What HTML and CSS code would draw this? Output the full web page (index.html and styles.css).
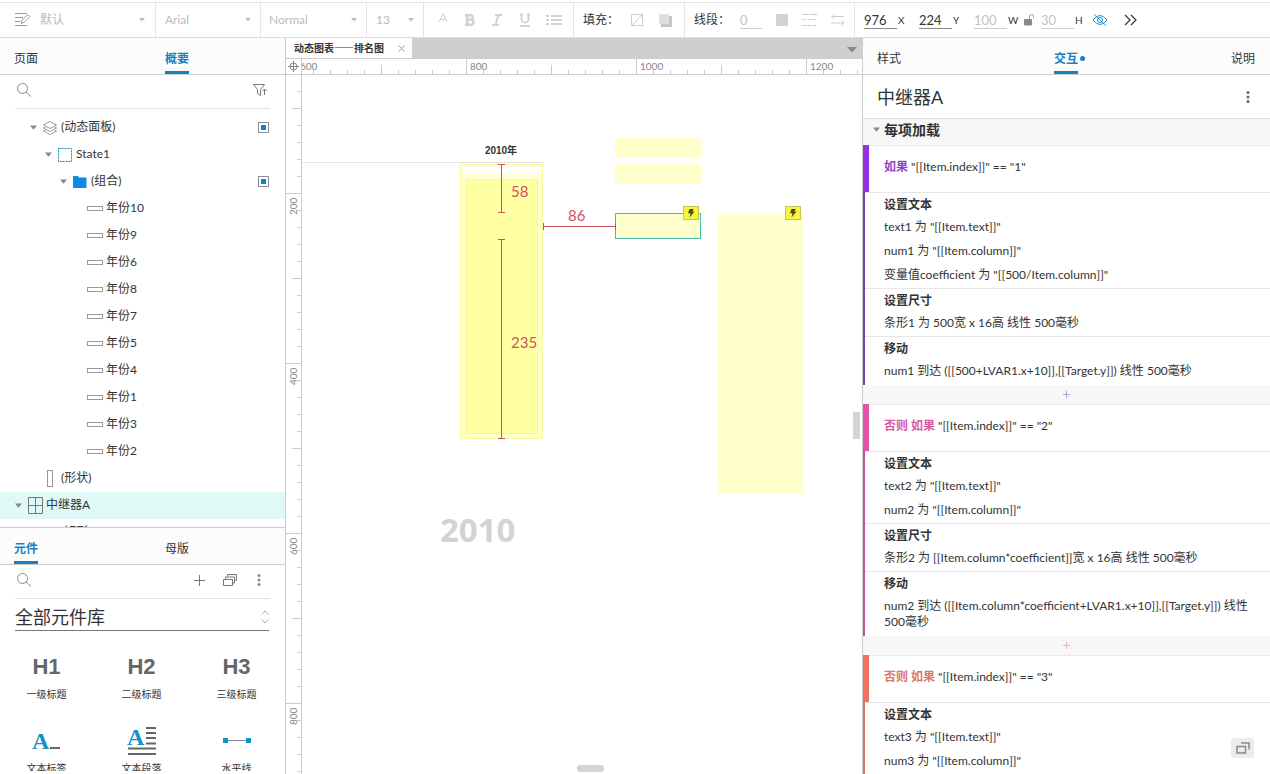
FILE: index.html
```html
<!DOCTYPE html>
<html lang="zh-CN">
<head>
<meta charset="utf-8">
<title>动态图表——排名图</title>
<link rel="stylesheet" href="styles.css">
</head>
<body>
<svg class="defs" aria-hidden="true">
  <symbol id="caret" viewBox="0 0 8 6"><path d="M0 0h8L4 5z" fill="currentColor"/></symbol>
  <symbol id="drop" viewBox="0 0 6 4"><path d="M0 0h6L3 3.5z" fill="currentColor"/></symbol>
  <symbol id="search" viewBox="0 0 16 16"><circle cx="6.5" cy="6.5" r="5" fill="none" stroke="currentColor"/><path d="M10 10l5 4.500" fill="none" stroke="currentColor"/></symbol>
  <symbol id="dots" viewBox="0 0 4 12"><circle cx="2" cy="1.500" r="1.500" fill="currentColor"/><circle cx="2" cy="6" r="1.500" fill="currentColor"/><circle cx="2" cy="10.500" r="1.500" fill="currentColor"/></symbol>
  <symbol id="box" viewBox="0 0 16 6"><rect x=".5" y=".5" width="15" height="4" fill="none" stroke="#999"/></symbol>
  <symbol id="mark" viewBox="0 0 11 11"><rect x=".5" y=".5" width="10" height="10" fill="#fff" stroke="#8c8c96"/><rect x="3" y="3" width="5" height="5" fill="#1482c0"/></symbol>
  <symbol id="bolt" viewBox="0 0 16 14"><rect x=".5" y=".5" width="15" height="13" fill="#f8f540" stroke="#c9c64e"/><path d="M6.500 3h4.500L9.200 5.600h2.300L6.500 11.500l1-4.200H5z" fill="#4a4a20"/></symbol>
</svg>

<div class="app">
  <header class="toolbar">
    <div class="group style">
      <svg width="16" height="14" viewBox="0 0 16 14" fill="none" stroke="#999"><path d="M0 .5h12M0 4.500h8M0 8.500h5M0 12.500h12M6 10.500l1-3.500 6-5.500 2 2-6 6z"/></svg>
      <select aria-label="样式"><option>默认</option></select><svg class="drop"><use href="#drop"/></svg>
    </div>
    <div class="group family"><select aria-label="字体"><option>Arial</option></select><svg class="drop"><use href="#drop"/></svg></div>
    <div class="group weight"><select aria-label="字重"><option>Normal</option></select><svg class="drop"><use href="#drop"/></svg></div>
    <div class="group size"><select aria-label="字号"><option>13</option></select><svg class="drop"><use href="#drop"/></svg></div>
    <div class="group format">
      <button aria-label="颜色"><svg width="10" height="14" viewBox="0 0 10 14" fill="none" stroke="#ccc"><path d="M1 9L5 0.500 9 9M2.500 6.500h5"/></svg></button>
      <button aria-label="粗体"><svg width="12" height="14" viewBox="0 0 12 14" fill="none" stroke="#d2d2d2" stroke-width="2.400"><path d="M1 2.200h5.500a2.200 2.200 0 0 1 0 4.600H3h4a2.500 2.500 0 0 1 0 5H1M3.200 2v10"/></svg></button>
      <button aria-label="斜体"><svg width="12" height="14" viewBox="0 0 12 14" fill="none" stroke="#d2d2d2" stroke-width="2"><path d="M4 2h7M1 12h7M7.500 2l-3 10"/></svg></button>
      <button aria-label="下划线"><svg width="12" height="14" viewBox="0 0 12 14" fill="none" stroke="#d2d2d2" stroke-width="1.800"><path d="M2.500 1v5a3.200 3.200 0 0 0 7 0V1M1 1.500h3M8 1.500h3M1 13h10"/></svg></button>
      <button aria-label="列表"><svg width="16" height="12" viewBox="0 0 16 12" fill="#d2d2d2"><path d="M0 1h3v2H0zM0 5h3v2H0zM0 9h3v2H0zM5 1h11v2H5zM5 5h11v2H5zM5 9h11v2H5z"/></svg></button>
    </div>
    <div class="group fill">
      <span>填充：</span>
      <button aria-label="填充颜色"><svg width="12" height="12" viewBox="0 0 12 12" fill="none" stroke="#ccc"><path d="M.5.5h11v11H.5zM1 11L11 1"/></svg></button>
      <button aria-label="阴影"><svg width="13" height="13" viewBox="0 0 13 13"><path d="M2 2h11v11H2z" fill="#c6c6c6"/><rect width="10" height="10" rx="1" fill="#dedede"/></svg></button>
    </div>
    <div class="group line">
      <span>线段：</span>
      <input class="off narrow" aria-label="线宽" value="0">
      <button aria-label="线段颜色"><svg width="12" height="12"><rect width="12" height="12" fill="#d2d2d2"/></svg></button>
      <button aria-label="线型"><svg width="15" height="12" viewBox="0 0 15 12" fill="none" stroke="#ccc"><path d="M0 .5h15" stroke-dasharray="7 1"/><path d="M0 5.500h15" stroke-dasharray="2 1"/><path d="M0 11.500h15" stroke-dasharray="4 1"/></svg></button>
      <button aria-label="箭头"><svg width="14" height="12" viewBox="0 0 14 12" fill="none" stroke="#ccc"><path d="M3.500 0L1 2.500 3.500 5M1 2.500h12M10.500 6.500L13 9l-2.500 2.500M13 9H0"/></svg></button>
    </div>
    <div class="group position">
      <label><input value="976"><span>X</span></label>
      <label><input value="224"><span>Y</span></label>
      <label><input class="off" value="100"><span>W</span></label>
      <svg class="lock" width="11" height="12" viewBox="0 0 11 12"><rect y="5" width="8" height="6.500" rx="1" fill="#888"/><path d="M5.500 5V2.500a2 2 0 0 1 4 0V4" fill="none" stroke="#999"/></svg>
      <label><input class="off" value="30"><span>H</span></label>
      <button class="eye" aria-label="隐藏"><svg width="16" height="12" viewBox="0 0 16 12" fill="none" stroke="#2490cc"><path d="M1 6q7-9 14 0-7 9-14 0zM2 .5l12 11"/><circle cx="8" cy="6" r="2.500"/></svg></button>
      <button aria-label="更多"><svg width="13" height="12" viewBox="0 0 13 12" fill="none" stroke="#333" stroke-width="1.200"><path d="M1 1l5 5-5 5M7 1l5 5-5 5"/></svg></button>
    </div>
  </header>

  <main class="body">
    <aside class="left">
      <section class="outline">
        <nav class="tabs"><button>页面</button><button class="on">概要</button></nav>
        <div class="searchbar">
          <svg width="16" height="16"><use href="#search"/></svg><input type="search" aria-label="搜索概要">
          <button aria-label="筛选"><svg width="14" height="12" viewBox="0 0 14 12" fill="none" stroke="#777"><path d="M.5.5h11L7.500 5.500v6l-3-2v-4zM11.500 11V5M9.500 7l2-2 2 2"/></svg></button>
        </div>
        <ul class="tree">
          <li class="l2"><svg class="caret"><use href="#caret"/></svg><svg width="14" height="14" viewBox="0 0 14 14" fill="none" stroke="#999"><path d="M7 .5L13.500 4 7 7.500.5 4zM2.500 6L.5 7 7 10.500 13.500 7l-2-1M2.500 9L.5 10 7 13.500l6.500-3.500-2-1"/></svg><span>(动态面板)</span><svg class="mark"><use href="#mark"/></svg></li>
          <li class="l3"><svg class="caret"><use href="#caret"/></svg><svg width="14" height="14" viewBox="0 0 14 14"><rect x=".5" y=".5" width="13" height="13" fill="none" stroke="#1482c0" stroke-dasharray="2 1"/></svg><span>State1</span></li>
          <li class="l4"><svg class="caret"><use href="#caret"/></svg><svg width="14" height="12" viewBox="0 0 14 12"><path d="M0 0h5l1 1.500h7.500V12H0z" fill="#0a8ce0"/></svg><span>(组合)</span><svg class="mark"><use href="#mark"/></svg></li>
          <li class="l5"><svg width="16" height="6"><use href="#box"/></svg><span>年份10</span></li>
          <li class="l5"><svg width="16" height="6"><use href="#box"/></svg><span>年份9</span></li>
          <li class="l5"><svg width="16" height="6"><use href="#box"/></svg><span>年份6</span></li>
          <li class="l5"><svg width="16" height="6"><use href="#box"/></svg><span>年份8</span></li>
          <li class="l5"><svg width="16" height="6"><use href="#box"/></svg><span>年份7</span></li>
          <li class="l5"><svg width="16" height="6"><use href="#box"/></svg><span>年份5</span></li>
          <li class="l5"><svg width="16" height="6"><use href="#box"/></svg><span>年份4</span></li>
          <li class="l5"><svg width="16" height="6"><use href="#box"/></svg><span>年份1</span></li>
          <li class="l5"><svg width="16" height="6"><use href="#box"/></svg><span>年份3</span></li>
          <li class="l5"><svg width="16" height="6"><use href="#box"/></svg><span>年份2</span></li>
          <li class="shape"><svg width="14" height="17" viewBox="0 0 14 17"><rect x="4.500" y=".5" width="5" height="16" fill="none" stroke="#999"/></svg><span>(形状)</span></li>
          <li class="l1 sel"><svg class="caret"><use href="#caret"/></svg><svg width="15" height="17" viewBox="0 0 15 17" fill="none" stroke="#777"><path d="M.5.5h14v16H.5zM7.500.5v16M.5 8.500h14"/></svg><span>中继器A</span></li>
          <li class="shape"><svg width="14" height="6"></svg><span>(矩形)</span></li>
        </ul>
      </section>
      <section class="library">
        <nav class="tabs"><button class="on">元件</button><button>母版</button></nav>
        <div class="searchbar">
          <svg width="16" height="16"><use href="#search"/></svg><input type="search" aria-label="搜索元件">
          <button aria-label="添加"><svg width="11" height="11" viewBox="0 0 11 11" stroke="#777"><path d="M5.500 0v11M0 5.500h11"/></svg></button>
          <button aria-label="元件库"><svg width="14" height="12" viewBox="0 0 14 12" fill="none" stroke="#777"><path d="M.5 5.500h9v6h-9zM2.500 5V3h9v6h-2M4.500 2.500v-2h9v6h-2"/></svg></button>
          <button class="kebab" aria-label="菜单"><svg width="4" height="12"><use href="#dots"/></svg></button>
        </div>
        <div class="picker">
          <select aria-label="元件库"><option>全部元件库</option></select>
          <svg width="8" height="14" viewBox="0 0 8 14" fill="none" stroke="#aaa"><path d="M.5 4.500L4 1l3.500 3.500M.5 9.500L4 13l3.500-3.500"/></svg>
        </div>
        <div class="widgets">
          <figure><b>H1</b><figcaption>一级标题</figcaption></figure>
          <figure><b>H2</b><figcaption>二级标题</figcaption></figure>
          <figure><b>H3</b><figcaption>三级标题</figcaption></figure>
          <figure><svg width="30" height="28" viewBox="0 0 30 28"><text class="glyph" x="0" y="22">A</text><path d="M18 21h10" stroke="#666" stroke-width="2"/></svg><figcaption>文本标签</figcaption></figure>
          <figure><svg width="30" height="28" viewBox="0 0 30 28"><text class="glyph" x="0" y="18">A</text><path d="M19 1h10M19 6h10M19 11h10M19 16.500h10M1 21.500h28M1 27h28" stroke="#666" stroke-width="2"/></svg><figcaption>文本段落</figcaption></figure>
          <figure><svg width="28" height="28" viewBox="0 0 28 28"><path d="M3 13.500h22" stroke="#888"/><path d="M0 11h5v5H0zM23 11h5v5h-5z" fill="#1590c8"/></svg><figcaption>水平线</figcaption></figure>
        </div>
      </section>
    </aside>

    <section class="center">
      <div class="pages">
        <div class="page"><b>动态图表——排名图</b><button aria-label="关闭"><svg width="7" height="7" viewBox="0 0 7 7" stroke="#999"><path d="M.5.5l6 6M6.500.5l-6 6"/></svg></button></div>
        <button class="list" aria-label="页面列表"><svg width="10" height="6" viewBox="0 0 10 6"><path d="M0 0h10L5 5.500z" fill="#888"/></svg></button>
      </div>
      <div class="corner"><svg width="11" height="11" viewBox="0 0 11 11" fill="none" stroke="#888"><circle cx="5.500" cy="5.500" r="3.500"/><path d="M5.500 0v11M0 5.500h11"/></svg></div>
      <div class="ruler-x"><span>600</span><span>800</span><span>1000</span><span>1200</span></div>
      <div class="ruler-y"><span>0</span><span>200</span><span>400</span><span>600</span><span>800</span></div>
      <div class="canvas">
        <div class="item axis"></div>
        <div class="item year">2010年</div>
        <div class="item outer"></div>
        <div class="item inner"></div>
        <div class="item rep1"></div>
        <div class="item rep2"></div>
        <div class="item chosen"></div>
        <div class="item tall"></div>
        <svg class="item bolt1"><use href="#bolt"/></svg>
        <svg class="item bolt2"><use href="#bolt"/></svg>
        <svg class="item measure" width="314" height="365" viewBox="0 0 314 365" fill="none" stroke="#c4525f"><path d="M199.500 89v48M196 89.500h7M196 137.500h7M199.500 164v199M196 164.500h7M196 363.500h7M241 151.500h73M241.500 148v7M313.500 148v7"/></svg>
        <span class="item gap g58">58</span>
        <span class="item gap g86">86</span>
        <span class="item gap g235">235</span>
        <div class="item big">2010</div>
        <div class="item bar-y"></div>
        <div class="item bar-x"></div>
      </div>
    </section>

    <aside class="right">
      <nav class="tabs spread"><button>样式</button><button class="on dot">交互</button><button>说明</button></nav>
      <div class="title"><h1>中继器A</h1><button aria-label="菜单"><svg width="4" height="12"><use href="#dots"/></svg></button></div>
      <h2 class="event"><svg class="caret"><use href="#caret"/></svg>每项加载</h2>
      <article class="case violet">
        <p class="cond"><b>如果</b> "[[Item.index]]" == "1"</p>
        <div class="action"><h3>设置文本</h3><p>text1 为 "[[Item.text]]"</p><p>num1 为 "[[Item.column]]"</p><p>变量值coefficient 为 "[[500/Item.column]]"</p></div>
        <div class="action"><h3>设置尺寸</h3><p>条形1 为 500宽 x 16高 线性 500毫秒</p></div>
        <div class="action"><h3>移动</h3><p>num1 到达 ([[500+LVAR1.x+10]],[[Target.y]]) 线性 500毫秒</p></div>
      </article>
      <button class="add blue" aria-label="添加动作"><svg width="7" height="7" viewBox="0 0 7 7" stroke="currentColor"><path d="M3.500 0v7M0 3.500h7"/></svg></button>
      <article class="case pink">
        <p class="cond"><b>否则 如果</b> "[[Item.index]]" == "2"</p>
        <div class="action"><h3>设置文本</h3><p>text2 为 "[[Item.text]]"</p><p>num2 为 "[[Item.column]]"</p></div>
        <div class="action"><h3>设置尺寸</h3><p>条形2 为 [[Item.column*coefficient]]宽 x 16高 线性 500毫秒</p></div>
        <div class="action"><h3>移动</h3><p>num2 到达 ([[Item.column*coefficient+LVAR1.x+10]],[[Target.y]]) 线性 500毫秒</p></div>
      </article>
      <button class="add rose" aria-label="添加动作"><svg width="7" height="7" viewBox="0 0 7 7" stroke="currentColor"><path d="M3.500 0v7M0 3.500h7"/></svg></button>
      <article class="case coral">
        <p class="cond"><b>否则 如果</b> "[[Item.index]]" == "3"</p>
        <div class="action"><h3>设置文本</h3><p>text3 为 "[[Item.text]]"</p><p>num3 为 "[[Item.column]]"</p></div>
      </article>
      <button class="float" aria-label="弹出面板"><svg width="14" height="12" viewBox="0 0 14 12" fill="none" stroke="#888" stroke-width="1.500"><path d="M1 4.500h8.500V11H1zM5 1h8v6.500"/></svg></button>
    </aside>
  </main>
</div>
</body>
</html>
```
FILE: styles.css
```css
* { box-sizing: border-box; }
body {
  margin: 0;
  font: 12px/16px Lato, "Noto Sans CJK SC", sans-serif;
  color: #333;
  background: #fff;
}
h1, h2, h3, p, ul, figure { margin: 0; padding: 0; }
button, input, select {
  margin: 0;
  padding: 0;
  border: 0;
  border-radius: 0;
  background: none;
  color: inherit;
  font: inherit;
  appearance: none;
}
button { display: inline-flex; align-items: center; justify-content: center; }
svg { flex: none; display: block; }
.defs { position: absolute; width: 0; height: 0; }
.app { display: grid; grid-template-rows: 38px minmax(0, 1fr); height: 100vh; overflow: hidden; }

/* toolbar */
.toolbar {
  display: flex;
  margin-top: 2px;
  border-top: 1px solid #e6e6e6;
  border-bottom: 1px solid #dcdcdc;
}
.group { display: flex; align-items: center; border-right: 1px solid #e6e6e6; color: #bbb; }
.group select { flex: 1; min-width: 0; }
.group .drop { width: 6px; height: 4px; }
.group.style { width: 156px; padding: 0 10px 0 15px; gap: 9px; }
.group.family { width: 105px; padding: 0 9px; }
.group.weight { width: 106px; padding: 0 9px 0 8px; }
.group.size { width: 57px; padding: 0 9px; }
.group.format { width: 150px; padding: 0 11px 0 14px; justify-content: space-between; }
.group.fill { width: 111px; padding-left: 9px; gap: 16px; color: #333; }
.group.line { width: 170px; padding-left: 9px; gap: 14px; color: #333; }
.fill span, .line span { width: 32px; white-space: nowrap; }
.group.position { flex: 1; gap: 16px; padding-left: 9px; border-right: 0; color: #333; }
.toolbar input { width: 33px; height: 18px; border-bottom: 1px solid #888; font-size: 13px; }
.toolbar input.off { color: #c4c4c4; border-color: #ccc; }
.toolbar input.narrow { width: 22px; }
.position label { display: flex; align-items: center; gap: 1px; width: 39px; font-size: 10px; }
.position .lock { margin: 0 -10px 0 -5px; }
.position .eye { margin-left: -4px; }

/* panels */
.body {
  display: grid;
  grid-template-columns: 286px minmax(0, 1fr) 408px;
  grid-template-rows: minmax(0, 1fr);
  min-height: 0;
}
.tabs {
  display: grid;
  grid-template-columns: 151px 1fr;
  height: 37px;
  padding: 0 14px;
  border-bottom: 1px solid #ccc;
  background: #fcfcfc;
}
.tabs button {
  justify-self: start;
  height: 36px;
  padding-top: 8px;
  border-bottom: 3px solid transparent;
}
.tabs .on { color: #1482c0; border-color: #1482c0; font-weight: bold; }
.tabs.spread { display: flex; justify-content: space-between; padding-right: 15px; }
.dot { position: relative; }
.dot::after {
  content: "";
  position: absolute;
  left: 26px;
  top: 18px;
  width: 5px;
  height: 5px;
  border-radius: 50%;
  background: #1482c0;
}
.left {
  display: grid;
  grid-template-rows: minmax(0, 489fr) minmax(0, 247fr);
  border-right: 1px solid #ccc;
}
.outline, .library { overflow: hidden; }
.library { border-top: 1px solid #ccc; border-bottom: 3px solid #fff; }
.searchbar {
  display: flex;
  align-items: center;
  gap: 18px;
  height: 34px;
  margin: 0 15px;
  padding: 0 3px 3px 1px;
  border-bottom: 1px solid #e0e0e0;
  color: #888;
}
.searchbar input { flex: 1; min-width: 0; }
.kebab { width: 8px; margin-right: 4px; }
.caret { width: 8px; height: 6px; color: #888; }

.tree { list-style: none; padding-top: 5px; }
.tree li { display: flex; align-items: center; gap: 4px; height: 27px; padding-right: 16px; }
.tree span { padding-bottom: 2px; }
.tree .caret { width: 7px; margin-right: 2px; }
.tree .l1 { padding-left: 15px; }
.tree .l1 span { margin-left: -1px; }
.tree .l2 { padding-left: 30px; }
.tree .l3 { padding-left: 45px; }
.tree .l4 { padding-left: 60px; }
.tree .l5 { padding-left: 87px; gap: 3px; }
.tree .shape { padding-left: 43px; }
.tree .sel { background: #dff9f7; }
.tree .mark { width: 11px; height: 11px; margin-left: auto; }

.picker {
  display: flex;
  align-items: center;
  height: 32px;
  margin: 0 16px 0 15px;
  padding-top: 5px;
  border-bottom: 1px solid #777;
}
.picker select { flex: 1; font-size: 18px; line-height: 26px; }
.widgets { display: grid; grid-template-columns: repeat(3, 1fr); padding-top: 22px; row-gap: 22px; }
.widgets figure { display: flex; flex-direction: column; align-items: center; gap: 2px; padding-right: 2px; }
.widgets b { font: bold 22px/28px "Liberation Sans", Arial, sans-serif; color: #666; }
.widgets figcaption { font-size: 10px; line-height: 22px; color: #333; }
.glyph { font: bold 24px "Liberation Serif", serif; fill: #1590c8; }

/* editor */
.center {
  display: grid;
  grid-template: 21px 16px minmax(0, 1fr) / 16px minmax(0, 1fr);
}
.pages { grid-column: 1 / 3; display: flex; justify-content: space-between; background: #cfcfcf; border-bottom: 1px solid #ccc; }
.page {
  display: flex;
  align-items: center;
  gap: 14px;
  padding: 0 7px 0 8px;
  background: #fff;
  font: 10px/16px "Noto Sans CJK SC", sans-serif;
}
.pages .list { padding: 4px 5px 0; }
.corner { display: flex; align-items: center; justify-content: center; border-right: 1px solid #ccc; border-bottom: 1px solid #ccc; }
.ruler-x, .ruler-y { display: flex; overflow: hidden; font-size: 10px; line-height: 14px; color: #888; background-repeat: repeat-x; }
.ruler-x {
  border-bottom: 1px solid #ccc;
  background-image: linear-gradient(90deg, #ccc 1px, transparent 1px), linear-gradient(90deg, #ccc 1px, transparent 1px);
  background-size: 17px 4px, 85px 9px;
  background-position: 11px bottom, 79px bottom;
}
.ruler-x span { flex: none; width: 170px; padding-left: 3px; border-left: 1px solid #ccc; }
.ruler-x span:first-child { margin-left: -6px; }
.ruler-y {
  flex-direction: column;
  border-right: 1px solid #ccc;
  background-repeat: repeat-y;
  background-image: linear-gradient(#ccc 1px, transparent 1px), linear-gradient(#ccc 1px, transparent 1px);
  background-size: 4px 17px, 9px 85px;
  background-position: right 16px, right 33px;
}
.ruler-y span {
  flex: none;
  height: 170px;
  padding-bottom: 4px;
  border-bottom: 1px solid #ccc;
  writing-mode: vertical-rl;
  transform: rotate(180deg);
  text-align: end;
}
.ruler-y span:first-child { margin-top: -52px; }
.canvas { position: relative; overflow: hidden; }

/* objects placed freely on the canvas */
.item { position: absolute; }
.axis { left: 0; top: 87px; width: 241px; height: 1px; background: #e3e3e3; }
.year { left: 158px; top: 68px; width: 82px; text-align: center; font: bold 10px/16px "Liberation Sans", "Noto Sans CJK SC", sans-serif; }
.outer { left: 158px; top: 89px; width: 83px; height: 275px; border: 1px solid #fafa96; background: linear-gradient(#fff 4px, #ffc 14px); }
.inner { left: 164px; top: 104px; width: 72px; height: 255px; border: 1px solid #f8f88c; background: #ffffa3; }
.rep1 { left: 313px; top: 63px; width: 86px; height: 20px; background: #ffc; }
.rep2 { left: 313px; top: 88px; width: 86px; height: 21px; background: #ffc; }
.chosen { left: 313px; top: 138px; width: 86px; height: 26px; background: #ffc; border: 1px solid #48bca4; }
.tall { left: 416px; top: 138px; width: 85px; height: 281px; background: #ffc; }
.bolt1 { left: 381px; top: 131px; width: 16px; height: 14px; }
.bolt2 { left: 483px; top: 131px; width: 16px; height: 14px; }
.measure { left: 0; top: 0; }
.gap { font-size: 15px; line-height: 18px; color: #cf5261; }
.g58 { left: 209px; top: 107px; }
.g86 { left: 266px; top: 131px; }
.g235 { left: 209px; top: 258px; }
.big { left: 138px; top: 433px; font: bold 33px/44px "Open Sans", sans-serif; color: #d3d3d3; }
.bar-y { right: 2px; top: 337px; width: 7px; height: 27px; background: #d4d4d4; }
.bar-x { left: 275px; bottom: 2px; width: 27px; height: 7px; border-radius: 3px; background: #d4d4d4; }

/* interactions */
.right { position: relative; border-left: 1px solid #ccc; overflow: hidden; }
.title {
  display: flex;
  align-items: center;
  justify-content: space-between;
  height: 44px;
  padding: 0 20px 0 14px;
  border-bottom: 1px solid #ddd;
  color: #666;
}
.title h1 { font-size: 18px; line-height: 26px; font-weight: normal; color: #333; }
.event {
  display: flex;
  align-items: center;
  gap: 4px;
  height: 26px;
  padding: 0 0 4px 10px;
  background: #f7f7f7;
  font-size: 14px;
  line-height: 20px;
}
.event .caret { width: 7px; }
.case { border-left: 2px solid; box-shadow: 0 1px #ddd; padding-bottom: 1px; }
.violet { border-left-color: #7b3fb4; --tone: #9333e0; --word: #8e44c8; }
.pink { border-left-color: #b85a94; --tone: #e055a6; --word: #d758a6; }
.coral { border-left-color: #d97768; --tone: #f0715f; --word: #e07468; }
.cond {
  height: 47px;
  margin-left: -2px;
  padding: 14px 0 0 15px;
  border-left: 6px solid var(--tone);
  box-shadow: inset 0 1px #eaeaea;
}
.cond b { color: var(--word); }
.action { padding: 0 12px 0 19px; box-shadow: inset 0 1px #e6e6e6; }
.action h3 { padding-top: 1px; font-size: 12px; line-height: 23px; }
.action p { padding: 3px 0 5px; }
.add { display: flex; width: 100%; height: 19px; background: #f7f7f7; }
.blue { color: #a9a0f0; }
.rose { color: #eeb0b8; }
.float { position: absolute; right: 16px; bottom: 16px; width: 23px; height: 20px; border-radius: 2px; background: #ececec; }
```
